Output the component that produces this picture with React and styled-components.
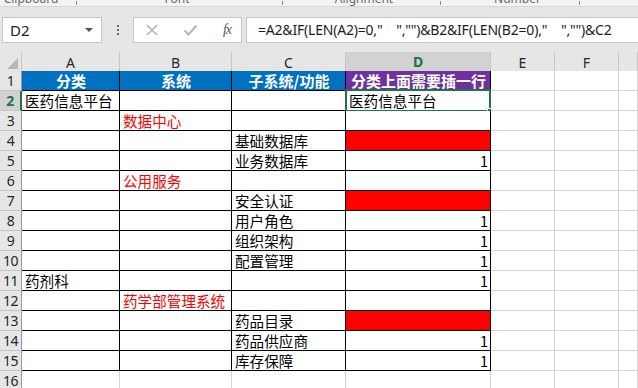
import styled, { createGlobalStyle } from "styled-components";

const GlobalStyle = createGlobalStyle`
  html, body {
    margin: 0;
    padding: 0;
    background: #ffffff;
    overflow: hidden;
  }
`

const COLS = "22px 98px 112px 114px 145px 64px 64px 1fr"
const BLUE = "#0070c0"
const PURPLE = "#7030a0"
const RED = "#ff0000"
const GREEN = "#217346"

const Window = styled.div`
  width: 638px;
  height: 388px;
  overflow: hidden;
  font-family: "Noto Sans", "Open Sans", sans-serif;
`

const Ribbon = styled.div`
  display: flex;
  height: 6px;
  background: #f3f3f3;
  border-bottom: 1px solid #d6d6d6;
  overflow: hidden;
`

const Group = styled.div`
  position: relative;
  flex-shrink: 0;
  box-sizing: border-box;
  width: ${props => props.$w}px;
  padding-right: ${props => props.$shift}px;
  text-align: center;
  font-size: 12px;
  line-height: 12px;
  color: #6a6a6a;
  margin-top: -7px;
`

const Launcher = styled.span`
  position: absolute;
  right: 6px;
  top: 8px;
  width: 5px;
  height: 4px;
  border-left: 1px solid #8a8a8a;
`

const FormulaBar = styled.div`
  display: flex;
  align-items: center;
  height: 45px;
  padding: 0 0 0 2px;
  background: #e6e6e6;
  box-sizing: border-box;
`

const Box = styled.div`
  display: flex;
  align-items: center;
  flex-shrink: 0;
  height: 26px;
  box-sizing: border-box;
  background: #ffffff;
  border: 1px solid #c6c6c6;
  font-size: 15px;
  color: #222;
`

const NameBox = styled(Box)`
  width: 100px;
  padding: 0 7px;
  justify-content: space-between;
`

const Caret = styled.span`
  width: 0;
  height: 0;
  border-left: 4px solid transparent;
  border-right: 4px solid transparent;
  border-top: 4px solid #555;
  margin-right: 1px;
`

const Dots = styled.div`
  width: 31px;
  flex-shrink: 0;
  display: flex;
  flex-direction: column;
  align-items: center;
  gap: 2px;
`

const Dot = styled.span`
  width: 2px;
  height: 2px;
  background: #666;
`

const FuncBox = styled(Box)`
  width: 109px;
  padding: 0 10px 0 11px;
  justify-content: space-between;
  margin-right: 4px;
`

const Fx = styled.span`
  font-family: "Liberation Serif", "DejaVu Serif", serif;
  font-style: italic;
  font-size: 14px;
  color: #555;
  letter-spacing: -1px;
`

const Input = styled(Box)`
  flex: 1 1 auto;
  min-width: 0;
  overflow: hidden;
  border-right: none;
  padding-left: 11px;
  white-space: pre;
  font-size: 14px;
  letter-spacing: -0.2px;
  color: #1e1e1e;
`

const Row = styled.div`
  display: grid;
  grid-template-columns: ${COLS};
  height: ${props => props.$h || 20}px;
`

const HeadCell = styled.div`
  box-sizing: border-box;
  display: flex;
  align-items: center;
  justify-content: center;
  background: ${props => props.$active ? "#d2d2d2" : "#e6e6e6"};
  color: ${props => props.$active ? GREEN : "#262626"};
  font-weight: ${props => props.$active ? "bold" : "normal"};
  font-size: 14px;
  border-right: 1px solid #c6c6c6;
  border-bottom: ${props => props.$active ? `2px solid ${GREEN}` : "1px solid #c6c6c6"};
`

const Corner = styled(HeadCell)`
  align-items: flex-end;
  justify-content: flex-end;
  padding: 0 3px 3px 0;
`

const CornerMark = styled.span`
  width: 0;
  height: 0;
  border-left: 11px solid transparent;
  border-bottom: 11px solid #b8b8b8;
`

const RowHead = styled.div`
  box-sizing: border-box;
  display: flex;
  align-items: center;
  justify-content: center;
  background: ${props => props.$active ? "#d2d2d2" : "#e6e6e6"};
  color: ${props => props.$active ? GREEN : "#262626"};
  font-weight: ${props => props.$active ? "bold" : "normal"};
  font-size: 14px;
  letter-spacing: -0.5px;
  border-bottom: 1px solid #c6c6c6;
  border-right: ${props => props.$active ? `2px solid ${GREEN}` : "1px solid #9a9a9a"};
`

const Cell = styled.div`
  position: relative;
  box-sizing: border-box;
  display: flex;
  align-items: center;
  justify-content: ${props => props.$align || "flex-start"};
  padding: 0 2px 0 3px;
  white-space: nowrap;
  font-family: "Noto Sans CJK SC", "Noto Sans", sans-serif;
  font-size: ${props => props.$bold ? 15 : 14.6}px;
  line-height: 19px;
  font-weight: ${props => props.$bold ? "bold" : "normal"};
  color: ${props => props.$color || "#000"};
  background: ${props => props.$fill || "#fff"};
  border-right: 1px solid ${props => props.$line || "#d4d4d4"};
  border-bottom: 1px solid ${props => props.$line || "#d4d4d4"};
`

const Selection = styled.div`
  position: absolute;
  top: -2px;
  left: -1px;
  right: -1px;
  bottom: -2px;
  border: 2px solid ${GREEN};
  pointer-events: none;
`

const Handle = styled.span`
  position: absolute;
  right: -5px;
  bottom: -5px;
  width: 5px;
  height: 5px;
  background: ${GREEN};
  border: 1px solid #fff;
`

// ribbon group labels, cut off by the top of the window
const groups = [
  { label: "Clipboard", w: 88, shift: 26 },
  { label: "Font", w: 206, shift: 28 },
  { label: "Alignment", w: 158, shift: 18 },
  { label: "Number", w: 139, shift: 8 },
]

const head = (t, fill) => ({ t, fill, bold: true, color: "#fff", align: "center" })
const red = t => ({ t, color: RED })
const one = { t: "1", align: "flex-end" }
const blank = {}
const block = { fill: RED }

const data = [
  [head("分类", BLUE), head("系统", BLUE), head("子系统/功能", BLUE), head("分类上面需要插一行", PURPLE)],
  [{ t: "医药信息平台" }, blank, blank, { t: "医药信息平台", selected: true }],
  [blank, red("数据中心"), blank, blank],
  [blank, blank, { t: "基础数据库" }, block],
  [blank, blank, { t: "业务数据库" }, one],
  [blank, red("公用服务"), blank, blank],
  [blank, blank, { t: "安全认证" }, block],
  [blank, blank, { t: "用户角色" }, one],
  [blank, blank, { t: "组织架构" }, one],
  [blank, blank, { t: "配置管理" }, one],
  [{ t: "药剂科" }, blank, blank, one],
  [blank, red("药学部管理系统"), blank, blank],
  [blank, blank, { t: "药品目录" }, block],
  [blank, blank, { t: "药品供应商" }, one],
  [blank, blank, { t: "库存保障" }, one],
  [blank, blank, blank, blank],
]

const letters = ["A", "B", "C", "D", "E", "F", ""]

const formula = '=A2&IF(LEN(A2)=0,"    ","")&B2&IF(LEN(B2=0),"    ","")&C2'

function App() {
  return (
    <Window>
      <GlobalStyle />

      <Ribbon>
        {groups.map(g => (
          <Group key={g.label} $w={g.w} $shift={g.shift}>
            {g.label}
            <Launcher />
          </Group>
        ))}
      </Ribbon>

      <FormulaBar>
        <NameBox>D2<Caret /></NameBox>
        <Dots><Dot /><Dot /><Dot /></Dots>
        <FuncBox>
          <svg width="14" height="14" viewBox="0 0 14 14">
            <path d="M2 2 L12 12 M12 2 L2 12" stroke="#b4b4b4" strokeWidth="1.6" fill="none" />
          </svg>
          <svg width="15" height="14" viewBox="0 0 15 14">
            <path d="M1.5 7.5 L5.5 11.5 L13.5 2.5" stroke="#b4b4b4" strokeWidth="2" fill="none" />
          </svg>
          <Fx>fx</Fx>
        </FuncBox>
        <Input>{formula}</Input>
      </FormulaBar>

      <Row $h={19}>
        <Corner><CornerMark /></Corner>
        {letters.map((l, i) => (
          <HeadCell key={i} $active={l === "D"}>{l}</HeadCell>
        ))}
      </Row>

      {data.map((cells, r) => {
        const inTable = r < 15
        return (
          <Row key={r}>
            <RowHead $active={r === 1}>{r + 1}</RowHead>
            {cells.map((c, i) => (
              <Cell
                key={i}
                $fill={c.fill}
                $color={c.color}
                $bold={c.bold}
                $align={c.align}
                $line={inTable ? "#000" : undefined}
              >
                {c.t}
                {c.selected && <Selection><Handle /></Selection>}
              </Cell>
            ))}
            <Cell />
            <Cell />
            <Cell />
          </Row>
        )
      })}
    </Window>
  )
}

export default App
